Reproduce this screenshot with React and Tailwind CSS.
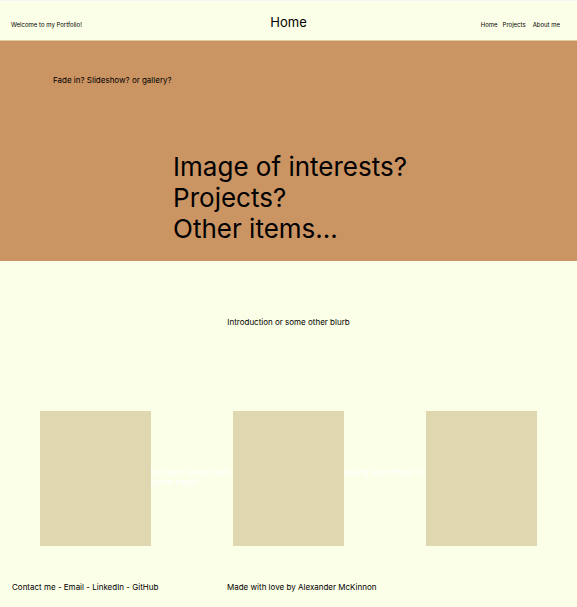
const links = [
  { label: "Home", href: "#home", gap: "" },
  { label: "Projects", href: "#projects", gap: "ml-[5px]" },
  { label: "About me", href: "#about", gap: "ml-[7px]" },
];

function Card() {
  return <article className="h-[135px] w-[111px] shrink-0 bg-[#dfd7af]" />;
}

function Blurb({ lines }) {
  return (
    <p className="min-w-0 flex-1 pt-[56px] text-[8px] leading-[10px] whitespace-nowrap text-white">
      {lines.map((line) => (
        <span key={line} className="block">
          {line}
        </span>
      ))}
    </p>
  );
}

export default function App() {
  return (
    <div className="flex min-h-screen flex-col border-t border-[#f5f5f5] bg-[#fcffe7] font-['Inter',sans-serif] text-[8px] leading-[10px] text-black">
      <header className="grid h-10 grid-cols-[1fr_auto_1fr] items-center border-b border-[#e3c9a1] pt-1 pr-[17px] pl-[11px]">
        <p className="pt-1 text-[6px] leading-[8px]">Welcome to my Portfolio!</p>
        <h1 className="pb-[2px] pl-[6px] text-[13px] leading-[16px]">Home</h1>
        <nav className="flex justify-end pt-1 text-[6px] leading-[8px]">
          {links.map(({ label, href, gap }) => (
            <a key={label} href={href} className={gap}>
              {label}
            </a>
          ))}
        </nav>
      </header>

      <main>
        <section className="h-[220px] bg-[#cb9463] pt-[34px]">
          <p className="pl-[53px]">Fade in? Slideshow? or gallery?</p>
          <h2 className="mt-[66px] pl-[30%] text-[26px] leading-[31px]">
            Image of interests?
            <br />
            Projects?
            <br />
            Other items...
          </h2>
        </section>

        <p className="pt-14 text-center">Introduction or some other blurb</p>

        <section className="mt-[84px] flex px-10">
          <Card />
          <Blurb lines={["the blurb about them", "ojects page?"]} />
          <Card />
          <Blurb lines={["casing something I le"]} />
          <Card />
        </section>
      </main>

      <footer className="grid grid-cols-[215px_1fr] px-3 pt-9 pb-4">
        <p>
          <a href="#contact">Contact me</a> - <a href="#email">Email</a> -{" "}
          <a href="#linkedin">LinkedIn</a> - <a href="#github">GitHub</a>
        </p>
        <p>Made with love by Alexander McKinnon</p>
      </footer>
    </div>
  );
}
